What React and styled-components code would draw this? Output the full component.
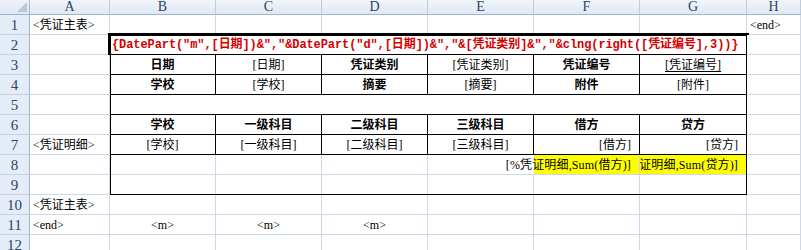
import React from "react";
import styled, { createGlobalStyle } from "styled-components";

const GRID = "#d0d7e5";
const HEAD_LINE = "#9eb6ce";
const INK = "#000";

const GlobalStyle = createGlobalStyle`
  html, body {
    margin: 0;
    padding: 0;
    background: #fff;
  }
  body {
    width: 801px;
    height: 250px;
    overflow: hidden;
  }
`;

const Sheet = styled.div`
  display: grid;
  grid-template-columns: 30px 80px repeat(5, 106px) 107px 1fr;
  grid-template-rows: 15px repeat(12, 20px);
  font-family: "Liberation Serif", "Noto Sans CJK SC", serif;
  font-size: 12px;
  color: #000;
`;

const Corner = styled.div`
  display: flex;
  align-items: flex-end;
  justify-content: flex-end;
  padding: 0 2px 2px 0;
  background: linear-gradient(#eef3fa, #e0e8f4);
  border-right: 1px solid ${HEAD_LINE};
  border-bottom: 1px solid ${HEAD_LINE};
`;

const ColHead = styled.div`
  display: flex;
  align-items: center;
  justify-content: center;
  background: linear-gradient(#f1f5fb, #e0e8f4);
  border-right: 1px solid #bccbdd;
  border-bottom: 1px solid ${HEAD_LINE};
  font-family: "Liberation Serif", serif;
  font-size: 14px;
  color: #2f4463;
  line-height: 1;
`;

const RowHead = styled.div`
  display: flex;
  align-items: center;
  justify-content: center;
  background: #e4ecf7;
  border-right: 1px solid ${HEAD_LINE};
  border-bottom: 1px solid #c5d3e3;
  font-family: "Liberation Serif", serif;
  font-size: 15px;
  color: #2f4463;
  line-height: 1;
  padding-top: 1px;
`;

const justify = { left: "flex-start", center: "center", right: "flex-end" };

const Cell = styled.div`
  display: flex;
  align-items: center;
  justify-content: ${(p) => justify[p.$align || "left"]};
  padding: 0 ${(p) => (p.$align === "right" ? "8px" : "3px")} 0 3px;
  grid-column: span ${(p) => p.$span || 1};
  min-width: 0;
  border-right: 1px solid ${(p) => p.$right || GRID};
  border-bottom: 1px solid ${(p) => p.$bottom || GRID};
  background: ${(p) => p.$fill || "#fff"};
  font-weight: ${(p) => (p.$bold ? 700 : 400)};
  text-decoration: ${(p) => (p.$underline ? "underline" : "none")};
  text-underline-offset: 2px;
  white-space: nowrap;
  overflow: ${(p) => (p.$spill ? "visible" : "hidden")};
  line-height: 1;
`;

const Total = styled(Cell)`
  background: #ffff00;
  letter-spacing: 0.15px;
`;

const Form = styled.div`
  grid-column: 3 / 9;
  grid-row: 3 / 11;
  display: grid;
  grid-template-columns: repeat(5, 106px) 107px;
  grid-template-rows: repeat(8, 20px);
  outline: 3px solid ${INK};
  outline-offset: -1px;
`;

const Formula = styled(Cell)`
  font-family: "Liberation Mono", "Noto Sans CJK SC", monospace;
  font-weight: 700;
  font-size: 12px;
  letter-spacing: -0.09px;
  color: #d40000;
  padding-left: 2px;
`;

const Triangle = () => (
  <svg width="10" height="10" viewBox="0 0 10 10">
    <polygon points="10,0 10,10 0,10" fill="#b9c8db" />
  </svg>
);

const letters = ["A", "B", "C", "D", "E", "F", "G", "H"];

const blank = (n, props = {}) =>
  Array.from({ length: n }, (_, i) => <Cell key={`b${i}`} {...props} />);

const App = () => {
  const boxed = { $right: INK, $bottom: INK, $align: "center" };

  return (
    <>
      <GlobalStyle />
      <Sheet>
        <Corner>
          <Triangle />
        </Corner>
        {letters.map((l) => (
          <ColHead key={l}>{l}</ColHead>
        ))}

        {/* row 1 */}
        <RowHead>1</RowHead>
        <Cell>&lt;凭证主表&gt;</Cell>
        {blank(6)}
        <Cell>&lt;end&gt;</Cell>

        {/* rows 2-9, the framed voucher block */}
        <RowHead>2</RowHead>
        <Cell />
        <Form>
          <Formula $span={6} $bottom={INK} $right={INK}>
            {'{DatePart("m",[日期])&","&DatePart("d",[日期])&","&[凭证类别]&","&clng(right([凭证编号],3))}'}
          </Formula>

          <Cell {...boxed} $bold>日期</Cell>
          <Cell {...boxed}>[日期]</Cell>
          <Cell {...boxed} $bold>凭证类别</Cell>
          <Cell {...boxed}>[凭证类别]</Cell>
          <Cell {...boxed} $bold>凭证编号</Cell>
          <Cell {...boxed} $underline>[凭证编号]</Cell>

          <Cell {...boxed} $bold>学校</Cell>
          <Cell {...boxed}>[学校]</Cell>
          <Cell {...boxed} $bold>摘要</Cell>
          <Cell {...boxed}>[摘要]</Cell>
          <Cell {...boxed} $bold>附件</Cell>
          <Cell {...boxed}>[附件]</Cell>

          <Cell $span={6} $right={INK} $bottom={INK} />

          <Cell {...boxed} $bold>学校</Cell>
          <Cell {...boxed} $bold>一级科目</Cell>
          <Cell {...boxed} $bold>二级科目</Cell>
          <Cell {...boxed} $bold>三级科目</Cell>
          <Cell {...boxed} $bold>借方</Cell>
          <Cell {...boxed} $bold>贷方</Cell>

          <Cell {...boxed}>[学校]</Cell>
          <Cell {...boxed}>[一级科目]</Cell>
          <Cell {...boxed}>[二级科目]</Cell>
          <Cell {...boxed}>[三级科目]</Cell>
          <Cell {...boxed} $align="right">[借方]</Cell>
          <Cell {...boxed} $align="right">[贷方]</Cell>

          {blank(3)}
          <Cell $right="#fff" />
          <Total $align="right" $spill>
            [%凭证明细,Sum(借方)]
          </Total>
          <Total $align="right">[%凭证明细,Sum(贷方)]</Total>

          {blank(6)}
        </Form>
        <Cell />

        <RowHead>3</RowHead>
        <Cell />
        <Cell />
        <RowHead>4</RowHead>
        <Cell />
        <Cell />
        <RowHead>5</RowHead>
        <Cell />
        <Cell />
        <RowHead>6</RowHead>
        <Cell />
        <Cell />
        <RowHead>7</RowHead>
        <Cell>&lt;凭证明细&gt;</Cell>
        <Cell />
        <RowHead>8</RowHead>
        <Cell />
        <Cell />
        <RowHead>9</RowHead>
        <Cell />
        <Cell />

        {/* rows 10-12 */}
        <RowHead>10</RowHead>
        <Cell>&lt;凭证主表&gt;</Cell>
        {blank(7)}

        <RowHead>11</RowHead>
        <Cell>&lt;end&gt;</Cell>
        <Cell $align="center">&lt;m&gt;</Cell>
        <Cell $align="center">&lt;m&gt;</Cell>
        <Cell $align="center">&lt;m&gt;</Cell>
        {blank(4)}

        <RowHead>12</RowHead>
        {blank(8)}
      </Sheet>
    </>
  );
};

export default App;
